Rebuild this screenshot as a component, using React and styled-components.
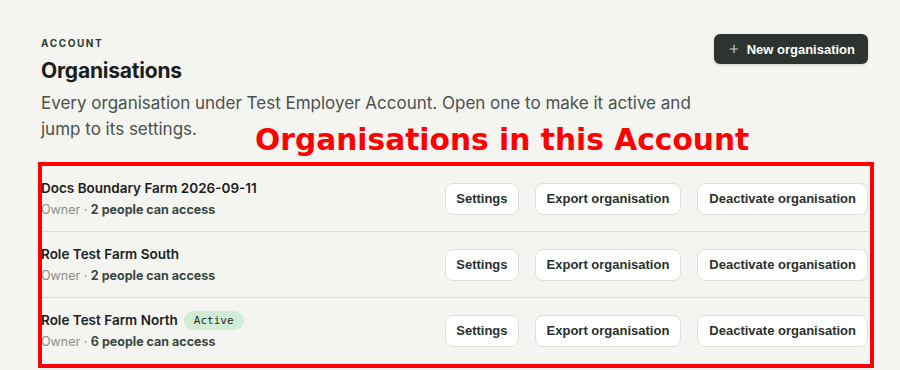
import React from "react";
import styled, { createGlobalStyle } from "styled-components";

const organisations = [
  { name: "Docs Boundary Farm 2026-09-11", role: "Owner", people: 2 },
  { name: "Role Test Farm South", role: "Owner", people: 2 },
  { name: "Role Test Farm North", role: "Owner", people: 6, active: true },
];

function App() {
  return (
    <>
      <GlobalStyle />
      <Page>
        <Header>
          <HeaderText>
            <Eyebrow>Account</Eyebrow>
            <Title>Organisations</Title>
            <Description>
              Every organisation under Test Employer Account. Open one to make
              it active and jump to its settings.
            </Description>
          </HeaderText>
          <PrimaryButton>
            <PlusIcon viewBox="0 0 12 12">
              <path d="M6 1v10M1 6h10" />
            </PlusIcon>
            New organisation
          </PrimaryButton>
        </Header>

        <List>
          {organisations.map((org) => (
            <Row key={org.name}>
              <Info>
                <NameLine>
                  <Name>{org.name}</Name>
                  {org.active && <Badge>Active</Badge>}
                </NameLine>
                <Meta>
                  {org.role} · <strong>{org.people} people can access</strong>
                </Meta>
              </Info>
              <Actions>
                <GhostButton>Settings</GhostButton>
                <GhostButton>Export organisation</GhostButton>
                <GhostButton>Deactivate organisation</GhostButton>
              </Actions>
            </Row>
          ))}
        </List>

        <NextSection>Linked accounts</NextSection>

        <AnnotationLabel>Organisations in this Account</AnnotationLabel>
        <AnnotationBox />
      </Page>
    </>
  );
}

const GlobalStyle = createGlobalStyle`
  html, body {
    margin: 0;
    background: #f4f4f0;
    overflow: hidden;
  }
  body {
    font-family: Inter, "Noto Sans", sans-serif;
    color: #1e2420;
  }
`;

const Page = styled.div`
  position: relative;
  padding: 35px 32px 0 41px;
  height: 370px;
  box-sizing: border-box;
  overflow: hidden;
`;

const Header = styled.div`
  display: flex;
  justify-content: space-between;
  align-items: flex-start;
`;

const HeaderText = styled.div`
  display: flex;
  flex-direction: column;
`;

const Eyebrow = styled.div`
  font-size: 10px;
  line-height: 16px;
  font-weight: 700;
  letter-spacing: 1.6px;
  text-transform: uppercase;
  color: #2f3b36;
`;

const Title = styled.h1`
  margin: 6px 0 0;
  font-size: 21px;
  line-height: 28px;
  font-weight: 700;
  letter-spacing: -0.2px;
  color: #1a1e1b;
`;

const Description = styled.p`
  margin: 5px 0 0;
  max-width: 670px;
  font-size: 17px;
  line-height: 26px;
  color: #4b514d;
`;

const PrimaryButton = styled.button`
  display: flex;
  align-items: center;
  gap: 8px;
  height: 30px;
  margin-top: -1px;
  padding: 0 13px 0 15px;
  border: none;
  border-radius: 6px;
  background: #2d3430;
  color: #ffffff;
  font-family: "Liberation Sans", Arial, sans-serif;
  font-size: 13px;
  font-weight: 700;
  box-shadow: 0 1px 3px rgba(0, 0, 0, 0.15);
`;

const PlusIcon = styled.svg`
  width: 10px;
  height: 10px;
  fill: none;
  stroke: #cfd3d0;
  stroke-width: 1.4;
`;

const List = styled.div`
  margin-top: 24px;
  display: flex;
  flex-direction: column;
`;

const Row = styled.div`
  display: flex;
  align-items: center;
  justify-content: space-between;
  padding: 14px 0;
  border-bottom: 1px solid #dcdcd7;
  &:last-child {
    border-bottom: none;
  }
`;

const Info = styled.div`
  display: flex;
  flex-direction: column;
  gap: 5px;
`;

const NameLine = styled.div`
  display: flex;
  align-items: center;
  gap: 6px;
  height: 17px;
`;

const Name = styled.div`
  font-size: 13.5px;
  line-height: 17px;
  font-weight: 600;
  color: #1c211e;
`;

const Badge = styled.span`
  padding: 2px 10px;
  border-radius: 10px;
  background: #d3ecd8;
  font-family: "DejaVu Sans Mono", monospace;
  font-size: 11px;
  line-height: 15px;
  color: #1f2b24;
`;

const Meta = styled.div`
  font-size: 12.5px;
  line-height: 15px;
  color: #8a8d8a;
  strong {
    font-weight: 700;
    color: #3a4740;
  }
`;

const Actions = styled.div`
  display: flex;
  gap: 16px;
`;

const GhostButton = styled.button`
  height: 32px;
  padding: 0 10px;
  border: 1px solid #dededa;
  border-radius: 8px;
  background: #ffffff;
  color: #2a2f2c;
  font-family: "Liberation Sans", Arial, sans-serif;
  font-size: 13px;
  font-weight: 700;
  &:not(:first-child) {
    padding: 0 11px;
  }
`;

const NextSection = styled.h2`
  margin: 14px 0 0;
  font-size: 18px;
  line-height: 24px;
  font-weight: 700;
  color: #1a1e1b;
`;

const AnnotationLabel = styled.div`
  position: absolute;
  top: 121px;
  left: 255px;
  font-family: "DejaVu Sans", sans-serif;
  font-size: 29.7px;
  font-weight: 700;
  line-height: 38px;
  color: #ff0000;
`;

const AnnotationBox = styled.div`
  position: absolute;
  top: 162px;
  left: 38px;
  width: 836px;
  height: 206px;
  box-sizing: border-box;
  border: 4px solid #ff0000;
`;

export default App;
